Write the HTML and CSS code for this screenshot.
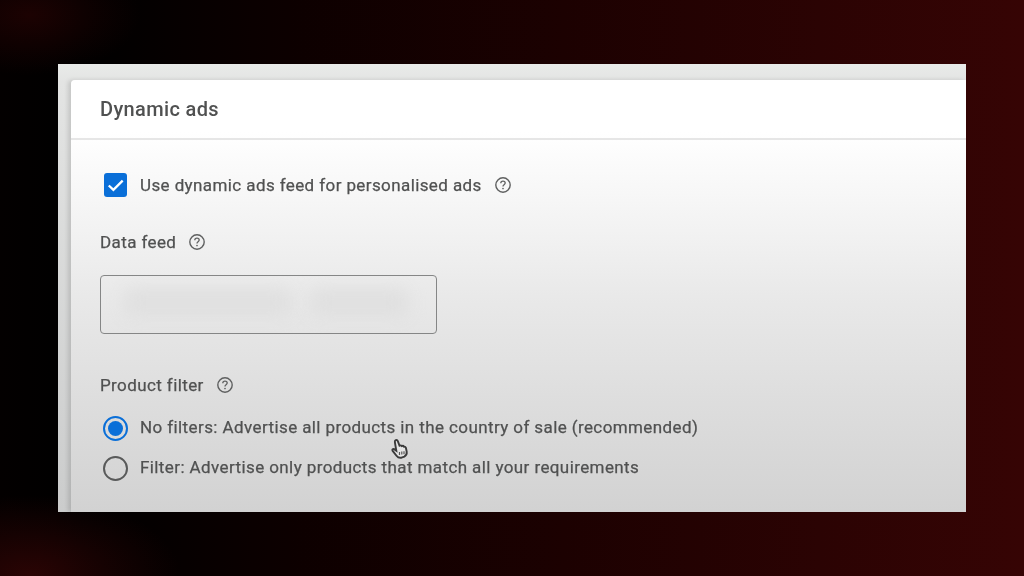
FILE: index.html
```html
<!DOCTYPE html>
<html lang="en">
<head>
<meta charset="utf-8">
<title>Dynamic ads</title>
<link rel="stylesheet" href="styles.css">
</head>
<body>
<main class="shot">
  <section class="card">
    <header class="card-head"><h1 class="title">Dynamic ads</h1></header>
    <div class="card-body">
      <div class="row row-check">
        <span class="checkbox"><svg viewBox="0 0 24 24" width="24" height="24"><path d="M5 12.500l4.800 4.600L19.500 7.500" fill="none" stroke="#fff" stroke-width="2.400"/></svg></span>
        <span class="text">Use dynamic ads feed for personalised ads</span>
        <svg class="help" viewBox="0 0 18 18"><use href="#q"/></svg>
      </div>
      <div class="row label-feed">
        <span class="text">Data feed</span>
        <svg class="help" viewBox="0 0 18 18"><use href="#q"/></svg>
      </div>
      <div class="field"><span class="smudge smudge-a"></span><span class="smudge smudge-b"></span></div>
      <div class="row label-filter">
        <span class="text">Product filter</span>
        <svg class="help" viewBox="0 0 18 18"><use href="#q"/></svg>
      </div>
      <div class="row row-radio first">
        <span class="radio on"></span>
        <span class="text">No filters: Advertise all products in the country of sale (recommended)</span>
      </div>
      <div class="row row-radio">
        <span class="radio"></span>
        <span class="text">Filter: Advertise only products that match all your requirements</span>
      </div>
    </div>
    <svg class="cursor" viewBox="0 0 20 24" width="20" height="24"><path d="M5.500 2.200c1-.6 2 .1 2.400 1.200l1.600 4.300c.9-.5 1.800-.3 2.300.4.8-.4 1.700-.2 2.200.6.900-.2 1.600.3 1.900 1.100l.8 3.900c.3 2-.6 4-2.400 5l-2.800 1c-2 .4-3.800-.4-5-2L2.500 12.600c-.6-1 .5-2.100 1.600-1.500l2.200 1.500L4.900 4.300c-.2-.9 0-1.700.6-2.100z" fill="#e4e4e4" stroke="#3a3a3a" stroke-width="1.900"/><path d="M9.500 14v3M11.800 13.500v3M14 13.200v3" stroke="#555" stroke-width="1.200"/></svg>
  </section>
</main>
<svg class="defs" width="0" height="0" aria-hidden="true">
  <symbol id="q" viewBox="0 0 18 18">
    <circle cx="9" cy="9" r="7.200" fill="none" stroke="#5f6060" stroke-width="1.400"/>
    <path d="M6.800 7.200c0-1.300 1-2.100 2.200-2.100s2.200.8 2.200 2c0 1.600-2.200 1.700-2.200 3.300" fill="none" stroke="#5f6060" stroke-width="1.300"/>
    <circle cx="9" cy="12.500" r=".85" fill="#5f6060"/>
  </symbol>
</svg>
</body>
</html>
```
FILE: styles.css
```css
html, body { margin: 0; height: 100%; }
body {
  width: 1024px;
  height: 576px;
  overflow: hidden;
  padding: 64px 58px;
  box-sizing: border-box;
  font-family: Roboto, "Liberation Sans", sans-serif;
  color: #505151;
  background:
    radial-gradient(ellipse 150px 80px at 30px 575px, #2a0404 0%, rgba(42,4,4,0) 100%),
    radial-gradient(ellipse 110px 60px at 30px 15px, #1c0202 0%, rgba(28,2,2,0) 100%),
    linear-gradient(90deg, #030000 0%, #000 8%, #0c0000 28%, #1c0101 55%, #2b0303 80%, #360404 100%);
}
.shot {
  width: 908px;
  height: 448px;
  padding: 16px 0 0 13px;
  box-sizing: border-box;
  overflow: hidden;
  background: linear-gradient(180deg, #e9ebe9 0%, #e3e4e3 4%, #cbcccc 100%);
}
.card {
  position: relative;
  height: 432px;
  border-radius: 4px 0 0 0;
  background: linear-gradient(180deg, #fff 0%, #fff 12%, #f6f6f6 28%, #e9e9e9 50%, #dddddd 75%, #d2d2d2 100%);
  box-shadow: -3px 0 4px rgba(0,0,0,.13);
}
.card-head {
  height: 60px;
  box-sizing: border-box;
  border-bottom: 2px solid #e6e6e6;
  padding-left: 29px;
  display: flex;
  align-items: center;
}
.title {
  margin: 0;
  font-size: 20px;
  font-weight: 500;
  letter-spacing: .35px;
  color: #505151;
  filter: blur(.4px);
}
.card-body { padding-left: 29px; }
.row { display: flex; align-items: center; }
.text {
  font-size: 17px;
  font-weight: 400;
  letter-spacing: .4px;
  white-space: nowrap;
  -webkit-text-stroke: .25px #505151;
  filter: blur(.35px);
}
.help { width: 18px; height: 18px; margin-left: 12px; flex: none; filter: blur(.3px); }
.row-check { height: 24px; margin-top: 33px; margin-left: 4px; }
.checkbox {
  width: 23px;
  height: 24px;
  flex: none;
  margin-right: 13px;
  border-radius: 3px;
  background: #0a6fd8;
  display: flex;
  align-items: center;
  justify-content: center;
}
.label-feed { height: 24px; margin-top: 33px; }
.field {
  position: relative;
  width: 337px;
  height: 59px;
  margin-top: 21px;
  box-sizing: border-box;
  border: 1.500px solid #858686;
  border-radius: 4px;
  overflow: hidden;
}
.smudge { position: absolute; top: 12px; height: 30px; background: #e0e0e0; border-radius: 12px; filter: blur(8px); }
.smudge-a { left: 22px; width: 170px; }
.smudge-b { left: 208px; width: 100px; }
.label-filter { height: 24px; margin-top: 39px; }
.row-radio { height: 24px; margin-top: 16px; margin-left: 3px; }
.row-radio.first { margin-top: 18px; }
.radio {
  width: 25px;
  height: 25px;
  flex: none;
  margin-top: 2px;
  margin-right: 12px;
  box-sizing: border-box;
  border: 2.500px solid #595a5a;
  border-radius: 50%;
}
.radio.on { border-color: #0a6fd8; position: relative; }
.radio.on::after {
  content: "";
  position: absolute;
  inset: 3px;
  border-radius: 50%;
  background: #0a6fd8;
}
.cursor { position: absolute; left: 319px; top: 358px; filter: blur(.4px); }
.defs { position: absolute; }
```
